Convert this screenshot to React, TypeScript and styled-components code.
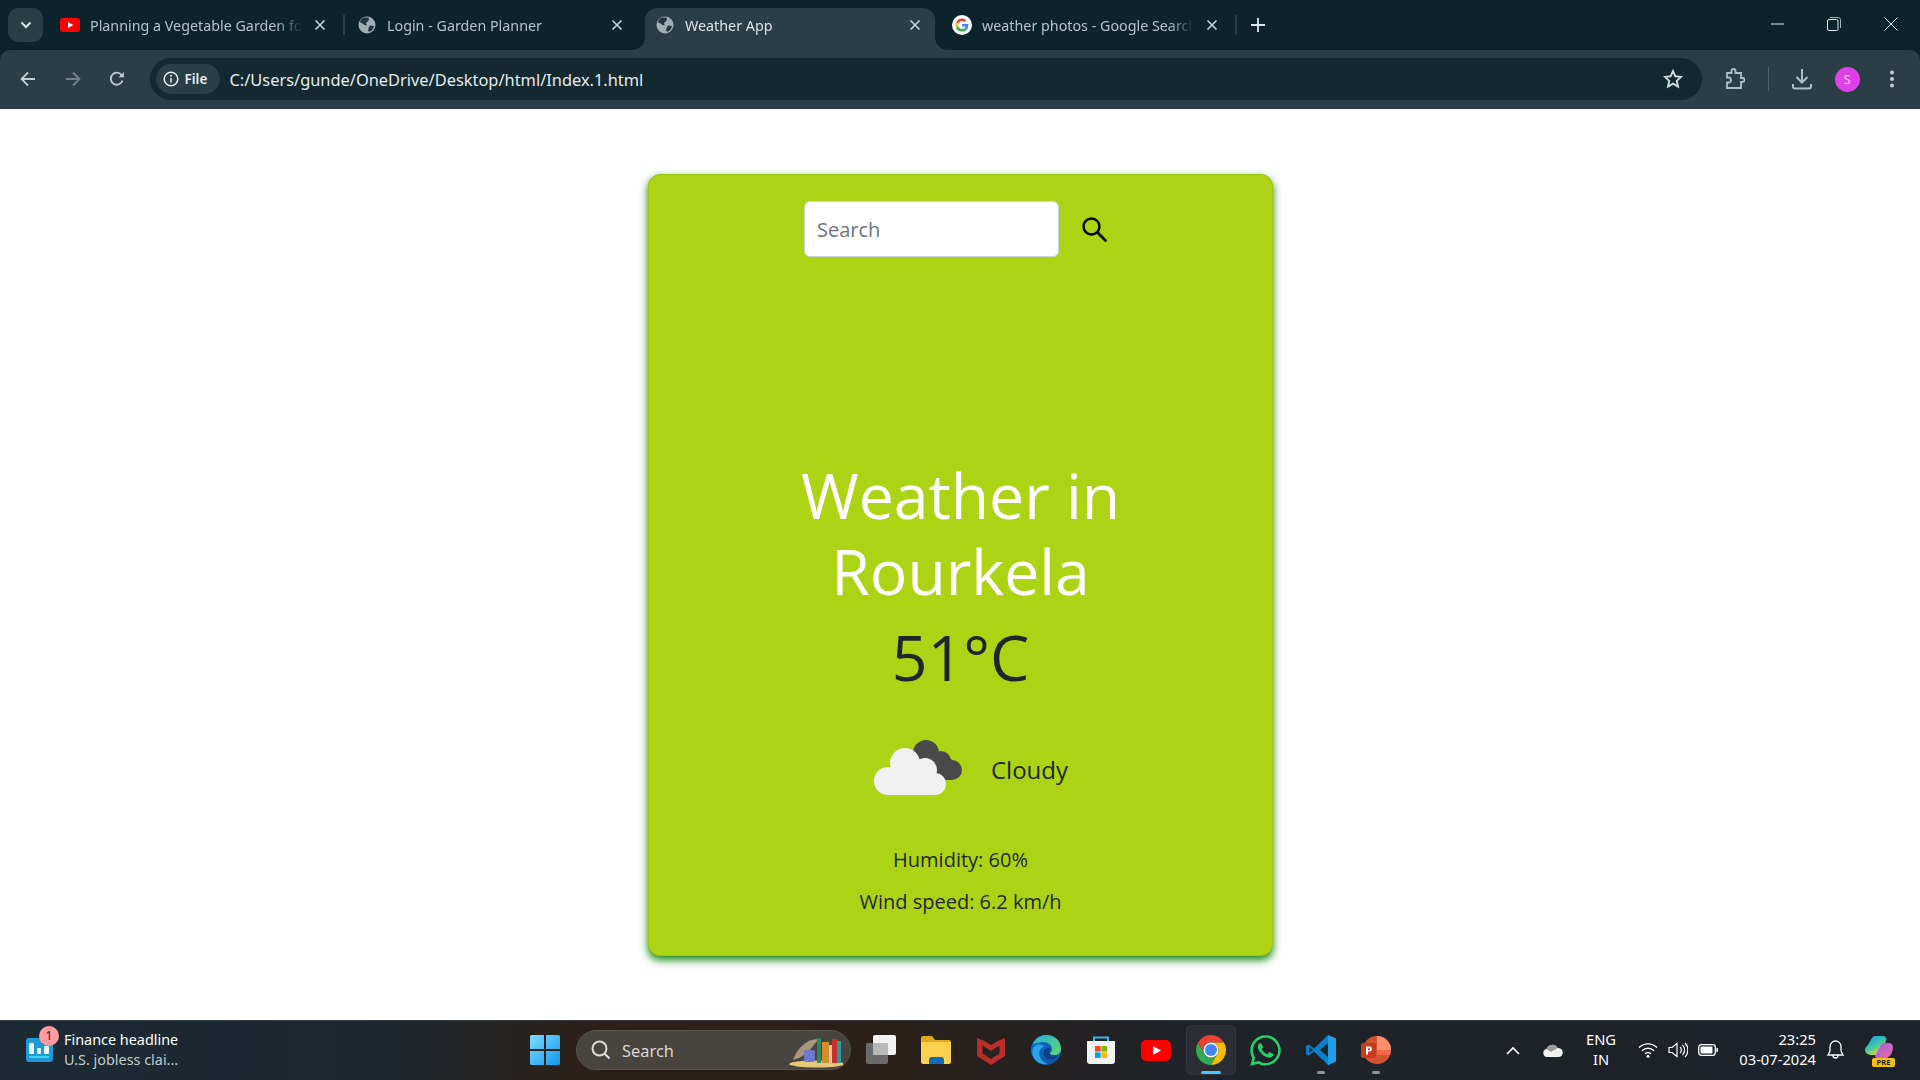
import * as React from 'react';
import styled, { createGlobalStyle } from 'styled-components';
import { FaWhatsapp } from 'react-icons/fa';

const GlobalStyle = createGlobalStyle`
    html, body {
        margin: 0;
        padding: 0;
        height: 100%;
        background: #fff;
        overflow: hidden;
    }
    #root {
        height: 100%;
    }
    * {
        box-sizing: border-box;
    }
`;

const UI_FONT = `"Noto Sans", "Open Sans", sans-serif`;
const PAGE_FONT = `"Open Sans", "Noto Sans", sans-serif`;

const Screen = styled.div`
    display: flex;
    flex-direction: column;
    width: 1920px;
    height: 1080px;
    background: #0c232b;
    font-family: ${UI_FONT};
`;

/* ---------- tab strip ---------- */

const TabStrip = styled.div`
    display: flex;
    align-items: flex-start;
    height: 50px;
    background: #0c232b;
    padding-left: 8px;
    flex: none;
`;

const TabSearchButton = styled.div`
    display: flex;
    align-items: center;
    justify-content: center;
    width: 35px;
    height: 34px;
    margin-top: 8px;
    margin-right: 5px;
    border-radius: 10px;
    background: #2a3e46;
`;

const Tab = styled.div<{ $active?: boolean; $divider?: boolean }>`
    position: relative;
    display: flex;
    align-items: center;
    width: 297px;
    height: 42px;
    margin-top: 8px;
    padding: 0 15px 8px 12px;
    color: ${({ $active }) => ($active ? '#d8e2e6' : '#b4c2c8')};
    font-size: 14.3px;
    background: ${({ $active }) => ($active ? '#2a3e46' : 'transparent')};
    border-radius: 12px 12px 0 0;

    &::after {
        content: '';
        display: ${({ $divider }) => ($divider ? 'block' : 'none')};
        position: absolute;
        right: 0;
        top: 7px;
        width: 2px;
        height: 20px;
        background: #2a3e46;
    }
`;

const ActiveTab = styled(Tab)`
    width: 290px;
    margin-left: 3px;
    margin-right: 5px;
    padding-left: 10px;
    padding-right: 10px;

    &::before,
    &::after {
        content: '';
        display: block;
        position: absolute;
        bottom: 0;
        top: auto;
        width: 12px;
        height: 12px;
        background: radial-gradient(circle at 0 0, #0c232b 11.5px, #2a3e46 12px);
    }
    &::before {
        left: -12px;
        right: auto;
    }
    &::after {
        left: auto;
        right: -12px;
        background: radial-gradient(circle at 100% 0, #0c232b 11.5px, #2a3e46 12px);
    }
`;

const Favicon = styled.span`
    display: flex;
    flex: none;
    width: 20px;
    height: 20px;
    margin-right: 10px;
    align-items: center;
    justify-content: center;
`;

const TabTitle = styled.span`
    flex: 1;
    overflow: hidden;
    white-space: nowrap;
    -webkit-mask-image: linear-gradient(to right, #000 88%, transparent 100%);
    mask-image: linear-gradient(to right, #000 88%, transparent 100%);
`;

const TabClose = styled.span`
    display: flex;
    flex: none;
    margin-left: 12px;
    margin-right: 4px;
`;

const NewTab = styled.div`
    display: flex;
    align-items: center;
    justify-content: center;
    width: 24px;
    height: 34px;
    margin-top: 8px;
    margin-left: 9px;
`;

const WindowControls = styled.div`
    display: flex;
    margin-left: auto;
    height: 48px;
    align-items: center;
    padding-right: 1px;
`;

const WindowButton = styled.div`
    display: flex;
    align-items: center;
    justify-content: center;
    width: 56.5px;
`;

/* ---------- toolbar ---------- */

const Toolbar = styled.div`
    display: flex;
    align-items: center;
    height: 59px;
    flex: none;
    padding: 0 5px 1px 5px;
    background: #2a3e46;
    border-radius: 10px 10px 0 0;
`;

const NavButton = styled.div`
    display: flex;
    align-items: center;
    justify-content: center;
    width: 45.5px;
    height: 40px;
`;

const ReloadButton = styled(NavButton)`
    padding-right: 3px;
`;

const Omnibox = styled.div`
    display: flex;
    align-items: center;
    width: 1552px;
    height: 42px;
    margin-left: 8px;
    padding: 0 19px 0 6px;
    border-radius: 21px;
    background: #14282f;
`;

const SiteChip = styled.div`
    display: flex;
    align-items: center;
    gap: 6px;
    height: 30px;
    width: 64px;
    padding-left: 7px;
    border-radius: 15px;
    background: #2a3e46;
    color: #e4ecef;
    font-size: 13.5px;
    font-weight: 600;
`;

const UrlText = styled.span`
    margin-left: 10px;
    color: #e4ecef;
    font-size: 16.4px;
    white-space: nowrap;
`;

const StarSlot = styled.span`
    display: flex;
    margin-left: auto;
`;

const ToolbarActions = styled.div`
    display: flex;
    align-items: center;
    flex: 1;
    padding-left: 23px;
`;

const ToolDivider = styled.span`
    width: 1px;
    height: 24px;
    margin: 0 23px 0 23px;
    background: #4b5f66;
`;

const Avatar = styled.span`
    display: flex;
    align-items: center;
    justify-content: center;
    width: 25px;
    height: 25px;
    margin-left: 23px;
    margin-right: 30px;
    border-radius: 50%;
    background: #e040e8;
    color: #ffd9fb;
    font-size: 12px;
`;

/* ---------- page ---------- */

const Page = styled.main`
    flex: 1;
    display: flex;
    justify-content: center;
    align-items: flex-start;
    padding-top: 65px;
    padding-left: 1px;
    background: #fff;
    font-family: ${PAGE_FONT};
`;

const WeatherCard = styled.section`
    display: flex;
    flex-direction: column;
    align-items: center;
    width: 625px;
    height: 782px;
    padding-top: 26px;
    background: #acd414;
    border: 1px solid #9fc412;
    border-radius: 12px;
    box-shadow: 0 4px 8px rgba(0, 128, 0, 0.95);
    color: #212529;
`;

const SearchRow = styled.form`
    display: flex;
    align-items: center;
    margin: 0;
`;

const SearchInput = styled.input`
    width: 255px;
    height: 56px;
    padding: 0 12px;
    border: 1px solid #ced4da;
    border-radius: 6px;
    background: #fff;
    font-family: ${PAGE_FONT};
    font-size: 20px;
    outline: none;

    &::placeholder {
        color: #6c757d;
        opacity: 1;
    }
`;

const SearchButton = styled.button`
    display: flex;
    align-items: center;
    width: 58px;
    height: 56px;
    padding: 0 0 0 22px;
    border: 0;
    background: transparent;
`;

const Title = styled.h1`
    width: 400px;
    margin: 200px 0 0;
    color: #fff;
    font-size: 62.5px;
    font-weight: 400;
    line-height: 75.5px;
    text-align: center;
`;

const Temperature = styled.h2`
    margin: 13px 0 0;
    font-size: 62.5px;
    font-weight: 400;
    line-height: 72px;
`;

const ConditionRow = styled.div`
    display: flex;
    align-items: center;
    margin-top: 43px;
    margin-left: 20px;
    height: 66px;
`;

const ConditionIcon = styled.svg`
    width: 90px;
    height: 60px;
    margin-right: 28px;
`;

const ConditionText = styled.span`
    font-size: 24px;
    margin-right: 0;
`;

const Stat = styled.p<{ $first?: boolean }>`
    margin: ${({ $first }) => ($first ? '43px' : '12px')} 0 0;
    font-size: 20px;
    line-height: 30px;
`;

/* ---------- taskbar ---------- */

const Taskbar = styled.footer`
    display: flex;
    align-items: center;
    height: 60px;
    flex: none;
    padding-bottom: 1px;
    border-top: 1px solid #343c42;
    background: linear-gradient(
        90deg,
        #1b2a33 0%,
        #1e2830 20%,
        #2c211a 30%,
        #2a2019 46%,
        #1f2329 62%,
        #1c2229 100%
    );
    color: #fff;
`;

const Widget = styled.div`
    display: flex;
    align-items: center;
    width: 517px;
    padding-left: 26px;
`;

const WidgetIcon = styled.span`
    position: relative;
    display: flex;
    width: 28px;
    height: 30px;
    margin-right: 10px;
`;

const WidgetBadge = styled.span`
    position: absolute;
    left: 13px;
    top: -9px;
    width: 20px;
    height: 20px;
    border-radius: 50%;
    background: #ff99a4;
    color: #2a1a1c;
    font-size: 12px;
    line-height: 20px;
    text-align: center;
`;

const WidgetText = styled.div`
    display: flex;
    flex-direction: column;
    font-size: 14.4px;
    line-height: 20px;
`;

const WidgetSub = styled.span`
    color: #c4c9cc;
`;

const TaskCell = styled.div<{ $active?: boolean }>`
    position: relative;
    display: flex;
    align-items: center;
    justify-content: center;
    width: ${({ $active }) => ($active ? '50px' : '55px')};
    height: 50px;
    margin: 0 ${({ $active }) => ($active ? '2.5px' : '0')};
    border-radius: 6px;
    background: ${({ $active }) => ($active ? '#2a2e34' : 'transparent')};
    box-shadow: ${({ $active }) => ($active ? 'inset 0 0 0 1px #33373d' : 'none')};
`;

const RunDot = styled.span<{ $active?: boolean }>`
    position: absolute;
    bottom: 1px;
    left: 50%;
    width: ${({ $active }) => ($active ? '20px' : '8px')};
    height: 3px;
    margin-left: ${({ $active }) => ($active ? '-10px' : '-4px')};
    border-radius: 2px;
    background: ${({ $active }) => ($active ? '#4cc2ff' : '#8f9396')};
`;

const SearchPill = styled.div`
    display: flex;
    align-items: center;
    width: 275px;
    height: 40px;
    margin: 0 2px 0 4px;
    padding-left: 14px;
    border-radius: 20px;
    border: 1px solid #57534d;
    background: #48443e;
    color: #d6d4d0;
    font-size: 16.4px;
`;

const PillLabel = styled.span`
    margin-left: 11px;
`;

const PillArt = styled.svg`
    margin-left: auto;
    margin-right: 7px;
`;

const Tray = styled.div`
    display: flex;
    align-items: center;
    margin-left: auto;
    padding-right: 14px;
`;

const TrayCell = styled.div<{ $width: number }>`
    display: flex;
    align-items: center;
    justify-content: center;
    width: ${({ $width }) => $width}px;
`;

const TrayLabel = styled.div<{ $align?: string }>`
    display: flex;
    flex-direction: column;
    align-items: ${({ $align }) => $align || 'center'};
    margin-bottom: 2px;
    font-size: 14.7px;
    line-height: 20px;
    white-space: nowrap;
`;

const ClockCell = styled(TrayCell)`
    justify-content: flex-end;
`;

const CopilotWrap = styled.div`
    position: relative;
    display: flex;
    width: 30px;
    height: 30px;
`;

const PreTag = styled.span`
    position: absolute;
    left: 7px;
    bottom: -2px;
    width: 23px;
    height: 9px;
    border-radius: 2px;
    background: #f5c211;
    color: #1c1c1c;
    font-size: 7.5px;
    font-weight: 700;
    line-height: 9px;
    text-align: center;
`;

/* ---------- icons ---------- */

const CloseIcon = ({ color = '#c8d4d9' }: { color?: string }) => (
    <svg width="12" height="12" viewBox="0 0 12 12">
        <path d="M1.5 1.5l9 9M10.5 1.5l-9 9" stroke={color} strokeWidth="1.6" fill="none" />
    </svg>
);

const GlobeIcon = () => (
    <svg width="18" height="18" viewBox="0 0 18 18">
        <circle cx="9" cy="9" r="8.5" fill="#a0adb3" />
        <path d="M6 1.5l5 .3-.5 3-2.5 2.2.8 2.5-2.3-.4L3.5 6.8 1.8 6.4C2.6 4 4 2.4 6 1.5z" fill="#20363e" />
        <path d="M12 9.5l4 .5c-.4 2.6-2 4.8-4.4 5.8L10 15l.5-3z" fill="#20363e" />
    </svg>
);

const YoutubeIcon = ({ size = 20 }: { size?: number }) => (
    <svg width={size} height={size * 0.7} viewBox="0 0 30 21">
        <rect width="30" height="21" rx="5" fill="#f00" />
        <path d="M12 6l8 4.5-8 4.5z" fill="#fff" />
    </svg>
);

const GoogleIcon = () => (
    <svg width="20" height="20" viewBox="0 0 20 20">
        <circle cx="10" cy="10" r="10" fill="#fff" />
        <g transform="translate(3.4 3.4) scale(0.275)">
            <path fill="#EA4335" d="M24 9.5c3.54 0 6.71 1.22 9.21 3.6l6.85-6.85C35.9 2.38 30.47 0 24 0 14.62 0 6.51 5.38 2.56 13.22l7.98 6.19C12.43 13.72 17.74 9.5 24 9.5z" />
            <path fill="#4285F4" d="M46.98 24.55c0-1.57-.15-3.09-.38-4.55H24v9.02h12.94c-.58 2.96-2.26 5.48-4.78 7.18l7.73 6c4.51-4.18 7.09-10.36 7.09-17.65z" />
            <path fill="#FBBC05" d="M10.53 28.59c-.48-1.45-.76-2.99-.76-4.59s.27-3.14.76-4.59l-7.98-6.19C.92 16.46 0 20.12 0 24c0 3.88.92 7.54 2.56 10.78l7.97-6.19z" />
            <path fill="#34A853" d="M24 48c6.48 0 11.93-2.13 15.89-5.81l-7.73-6c-2.15 1.45-4.92 2.3-8.16 2.3-6.26 0-11.57-4.22-13.47-9.91l-7.98 6.19C6.51 42.62 14.62 48 24 48z" />
        </g>
    </svg>
);

const ChromeIcon = () => (
    <svg width="30" height="30" viewBox="2 2 44 44">
        <path fill="#ea4335" d="M43.05 13A22 22 0 0 0 4.95 13L14.47 29.5A11 11 0 0 1 24 13z" />
        <path fill="#34a853" d="M4.95 13A22 22 0 0 0 24 46L33.53 29.5A11 11 0 0 1 14.47 29.5z" />
        <path fill="#fbbc04" d="M24 46A22 22 0 0 0 43.05 13H24A11 11 0 0 1 33.53 29.5z" />
        <circle cx="24" cy="24" r="11" fill="#fff" />
        <circle cx="24" cy="24" r="8.8" fill="#4285f4" />
    </svg>
);

const CloudIcon = () => (
    <ConditionIcon viewBox="0 0 90 60">
        <g fill="#4a4a4a">
            <circle cx="53" cy="14" r="13" />
            <circle cx="68" cy="22" r="10" />
            <circle cx="79" cy="31" r="10" />
            <path d="M45 6L70 14 86 26 78 41H60z" />
        </g>
        <g fill="#f1f1f1">
            <circle cx="32" cy="24" r="15" />
            <circle cx="52" cy="31" r="12" />
            <circle cx="15" cy="42" r="14" />
            <circle cx="62" cy="45" r="11" />
            <rect x="15" y="36" width="47" height="20" />
        </g>
    </ConditionIcon>
);

const EdgeIcon = () => (
    <svg width="30" height="30" viewBox="0 0 30 30">
        <defs>
            <linearGradient id="edgeTop" x1="0" y1="0" x2="1" y2="1">
                <stop offset="0" stopColor="#1fb5d8" />
                <stop offset="1" stopColor="#62d66d" />
            </linearGradient>
            <linearGradient id="edgeLow" x1="0" y1="0" x2="1" y2="1">
                <stop offset="0" stopColor="#0f74c7" />
                <stop offset="1" stopColor="#0c4f9d" />
            </linearGradient>
        </defs>
        <circle cx="15" cy="15" r="15" fill="url(#edgeLow)" />
        <path d="M2 8C5 3 10 0 15 0c9 0 15 6 15 14 0 4-3 6-7 6-3 0-4-1-4-2 1-1 2-2 2-4 0-4-4-7-9-7-4 0-8 2-10 1z" fill="url(#edgeTop)" />
        <path d="M13 12c-4 1-6 5-4 10 1 3 4 6 8 7-5 1-11-1-14-6C0 18 1 12 6 10c3-1 6 0 7 2z" fill="#2aa4e8" />
        <path d="M17 13c-3 0-5 3-4 7 1 3 5 5 9 4 3-1 5-3 6-5-2 2-5 3-7 2-3-1-3-4-2-6 1-1 0-2-2-2z" fill="#0b3f86" />
    </svg>
);

const StoreIcon = () => (
    <svg width="30" height="30" viewBox="0 0 30 30">
        <path d="M8 7V2.5h14V7" stroke="#35b8f0" strokeWidth="2" fill="none" />
        <path d="M1 6h28v20a3 3 0 0 1-3 3H4a3 3 0 0 1-3-3z" fill="#f2f2f2" />
        <rect x="9" y="11" width="5.6" height="5.6" fill="#f25022" />
        <rect x="15.4" y="11" width="5.6" height="5.6" fill="#7fba00" />
        <rect x="9" y="17.4" width="5.6" height="5.6" fill="#00a4ef" />
        <rect x="15.4" y="17.4" width="5.6" height="5.6" fill="#ffb900" />
    </svg>
);

const VsCodeIcon = () => (
    <svg width="30" height="30" viewBox="0 0 30 30">
        <path d="M22 0l8 3.5v23L22 30 8 16.5 3 20.5 0 19V11l3-1.500 5 4z" fill="#0a7fcc" />
        <path d="M22 0l8 3.5v23L22 30z" fill="#1e9ee8" />
        <path d="M22 8l-8 7 8 7z" fill="#20262c" />
        <path d="M3 12l4 3-4 3z" fill="#20262c" />
    </svg>
);

const PowerPointIcon = () => (
    <svg width="30" height="30" viewBox="0 0 30 30">
        <circle cx="16" cy="15" r="14" fill="#d35230" />
        <path d="M16 1a14 14 0 0 1 14 14H16z" fill="#ff8f6b" />
        <path d="M16 15h14a14 14 0 0 1-1 5H16z" fill="#ed6c47" />
        <rect x="0" y="8" width="15" height="15" rx="2" fill="#c43e1c" />
        <path d="M5 11.500h3.400a2.500 2.500 0 0 1 0 5H7v3H5zM7 13.200v1.800h1.200a.9.9 0 0 0 0-1.800z" fill="#fff" />
    </svg>
);

const McAfeeIcon = () => (
    <svg width="28" height="30" viewBox="0 0 28 30">
        <path d="M0 3l7.500 3L14 10l6.500-4L28 3v18l-14 9-14-9z" fill="#b92d2b" />
        <path d="M5.500 10.500L14 16l8.500-5.500v8L14 24l-8.500-5.500z" fill="#2a221e" />
    </svg>
);

const BookShelf = () => (
    <PillArt width="56" height="40" viewBox="0 0 56 40">
        <ellipse cx="30" cy="34" rx="28" ry="3.500" fill="#e8c77a" />
        <path d="M6 30C10 18 20 9 31 9 27 16 20 24 12 28z" fill="#a8957e" />
        <rect x="17" y="20" width="11" height="12" rx="2" fill="#6d78d0" />
        <rect x="30" y="8" width="4" height="25" fill="#2f8a5b" />
        <rect x="35" y="12" width="7" height="21" fill="#d98a2f" />
        <rect x="42" y="15" width="3" height="18" fill="#dcc9a0" />
        <rect x="45" y="9" width="5" height="24" fill="#c7312c" />
        <rect x="50" y="11" width="4" height="22" fill="#2a9d9d" />
    </PillArt>
);

export default function App() {
    return (
        <Screen>
            <GlobalStyle />
            <TabStrip>
                <TabSearchButton>
                    <svg width="12" height="8" viewBox="0 0 12 8">
                        <path d="M1.500 1.500L6 6l4.500-4.500" stroke="#dfe7ea" strokeWidth="2" fill="none" />
                    </svg>
                </TabSearchButton>
                <Tab $divider>
                    <Favicon>
                        <YoutubeIcon />
                    </Favicon>
                    <TabTitle>Planning a Vegetable Garden for Beginners</TabTitle>
                    <TabClose>
                        <CloseIcon />
                    </TabClose>
                </Tab>
                <Tab>
                    <Favicon>
                        <GlobeIcon />
                    </Favicon>
                    <TabTitle>Login - Garden Planner</TabTitle>
                    <TabClose>
                        <CloseIcon />
                    </TabClose>
                </Tab>
                <ActiveTab $active>
                    <Favicon>
                        <GlobeIcon />
                    </Favicon>
                    <TabTitle>Weather App</TabTitle>
                    <TabClose>
                        <CloseIcon />
                    </TabClose>
                </ActiveTab>
                <Tab $divider>
                    <Favicon>
                        <GoogleIcon />
                    </Favicon>
                    <TabTitle>weather photos - Google Search</TabTitle>
                    <TabClose>
                        <CloseIcon />
                    </TabClose>
                </Tab>
                <NewTab>
                    <svg width="14" height="14" viewBox="0 0 14 14">
                        <path d="M7 0v14M0 7h14" stroke="#dfe7ea" strokeWidth="1.800" />
                    </svg>
                </NewTab>
                <WindowControls>
                    <WindowButton>
                        <svg width="14" height="2" viewBox="0 0 14 2">
                            <path d="M0 1h13" stroke="#e8eef0" strokeWidth="1" />
                        </svg>
                    </WindowButton>
                    <WindowButton>
                        <svg width="14" height="14" viewBox="0 0 14 14">
                            <rect x="0.500" y="2.500" width="10.500" height="11" rx="1.500" stroke="#e8eef0" fill="none" />
                            <path d="M3 .5h8.500a2 2 0 0 1 2 2V11" stroke="#a5b2b7" fill="none" />
                        </svg>
                    </WindowButton>
                    <WindowButton>
                        <svg width="14" height="14" viewBox="0 0 14 14">
                            <path d="M.5.5l13 13M13.500.5l-13 13" stroke="#e8eef0" strokeWidth="1" />
                        </svg>
                    </WindowButton>
                </WindowControls>
            </TabStrip>

            <Toolbar>
                <NavButton>
                    <svg width="16" height="16" viewBox="0 0 16 16">
                        <path d="M15 8H2M8 1.500L1.500 8 8 14.500" stroke="#bfcdd2" strokeWidth="1.800" fill="none" />
                    </svg>
                </NavButton>
                <NavButton>
                    <svg width="16" height="16" viewBox="0 0 16 16">
                        <path d="M1 8h13M8 1.500L14.500 8 8 14.500" stroke="#6f8087" strokeWidth="1.800" fill="none" />
                    </svg>
                </NavButton>
                <ReloadButton>
                    <svg width="16" height="16" viewBox="0 0 16 16">
                        <path d="M13.500 9.500A6 6 0 1 1 12.500 4L14 5.500" stroke="#bfcdd2" strokeWidth="1.800" fill="none" />
                        <path d="M14.800 1v5.300H9.500z" fill="#bfcdd2" />
                    </svg>
                </ReloadButton>
                <Omnibox>
                    <SiteChip>
                        <svg width="16" height="16" viewBox="0 0 16 16">
                            <circle cx="8" cy="8" r="6.800" stroke="#e4ecef" strokeWidth="1.500" fill="none" />
                            <path d="M8 7v4.500" stroke="#e4ecef" strokeWidth="1.600" />
                            <circle cx="8" cy="4.800" r="1" fill="#e4ecef" />
                        </svg>
                        File
                    </SiteChip>
                    <UrlText>C:/Users/gunde/OneDrive/Desktop/html/Index.1.html</UrlText>
                    <StarSlot>
                        <svg width="20" height="20" viewBox="0 0 20 20">
                            <path d="M10 2l2.400 5.300 5.600.6-4.200 3.900 1.200 5.700L10 14.600l-5 2.900 1.200-5.700L2 7.900l5.600-.6z" stroke="#d0dade" strokeWidth="1.900" fill="none" />
                        </svg>
                    </StarSlot>
                </Omnibox>
                <ToolbarActions>
                    <svg width="20" height="22" viewBox="0 0 20 22">
                        <path d="M2 5h4.500V3a2 2 0 0 1 4 0v2H16v5h1.500a2 2 0 0 1 0 4H16v6H2v-5.500h1.500a2.500 2.500 0 0 0 0-5H2z" stroke="#a9c0c7" strokeWidth="1.800" fill="none" />
                    </svg>
                    <ToolDivider />
                    <svg width="20" height="22" viewBox="0 0 20 22">
                        <path d="M10 1v13M4.500 9l5.500 5.500L15.500 9" stroke="#a9c0c7" strokeWidth="2" fill="none" />
                        <path d="M1 16v2.500a2 2 0 0 0 2 2h14a2 2 0 0 0 2-2V16" stroke="#a9c0c7" strokeWidth="2" fill="none" />
                    </svg>
                    <Avatar>S</Avatar>
                    <svg width="4" height="18" viewBox="0 0 4 18">
                        <circle cx="2" cy="2.500" r="2" fill="#bfcdd2" />
                        <circle cx="2" cy="9" r="2" fill="#bfcdd2" />
                        <circle cx="2" cy="15.500" r="2" fill="#bfcdd2" />
                    </svg>
                </ToolbarActions>
            </Toolbar>

            <Page>
                <WeatherCard>
                    <SearchRow>
                        <SearchInput placeholder="Search" readOnly />
                        <SearchButton type="button" aria-label="Search">
                            <svg width="26" height="26" viewBox="0 0 26 26">
                                <circle cx="10.500" cy="10.500" r="8" stroke="#000" strokeWidth="2.400" fill="none" />
                                <path d="M16.500 16.500l8 8" stroke="#000" strokeWidth="2.600" strokeLinecap="round" />
                            </svg>
                        </SearchButton>
                    </SearchRow>
                    <Title>Weather in Rourkela</Title>
                    <Temperature>51°C</Temperature>
                    <ConditionRow>
                        <CloudIcon />
                        <ConditionText>Cloudy</ConditionText>
                    </ConditionRow>
                    <Stat $first>Humidity: 60%</Stat>
                    <Stat>Wind speed: 6.2 km/h</Stat>
                </WeatherCard>
            </Page>

            <Taskbar>
                <Widget>
                    <WidgetIcon>
                        <svg width="28" height="30" viewBox="0 0 28 30">
                            <rect y="3" width="27" height="24" rx="3" fill="#1f9ad6" />
                            <rect x="3" y="8" width="5" height="11" rx="1" fill="#e8f6fd" />
                            <rect x="11" y="13" width="4" height="6" rx="1" fill="#e8f6fd" />
                            <rect x="18" y="11" width="5" height="8" rx="1" fill="#e8f6fd" />
                            <rect x="3" y="21" width="20" height="2" fill="#3fd0ef" />
                        </svg>
                        <WidgetBadge>1</WidgetBadge>
                    </WidgetIcon>
                    <WidgetText>
                        <span>Finance headline</span>
                        <WidgetSub>U.S. jobless clai...</WidgetSub>
                    </WidgetText>
                </Widget>
                <TaskCell>
                    <svg width="30" height="30" viewBox="0 0 30 30">
                        <defs>
                            <linearGradient id="winLogo" x1="0" y1="0" x2="1" y2="1">
                                <stop offset="0" stopColor="#7fdcff" />
                                <stop offset="1" stopColor="#0f98ee" />
                            </linearGradient>
                        </defs>
                        <path d="M0 1.500A1.500 1.500 0 0 1 1.500 0H14v14H0zM16 0h12.500A1.500 1.500 0 0 1 30 1.500V14H16zM0 16h14v14H1.500A1.500 1.500 0 0 1 0 28.500zM16 16h14v12.500a1.500 1.500 0 0 1-1.500 1.500H16z" fill="url(#winLogo)" />
                    </svg>
                </TaskCell>
                <SearchPill>
                    <svg width="20" height="20" viewBox="0 0 20 20">
                        <circle cx="8.500" cy="8.500" r="7" stroke="#dcdad6" strokeWidth="2" fill="none" />
                        <path d="M13.500 13.500l5 5" stroke="#dcdad6" strokeWidth="2.200" />
                    </svg>
                    <PillLabel>Search</PillLabel>
                    <BookShelf />
                </SearchPill>
                <TaskCell>
                    <svg width="30" height="30" viewBox="0 0 30 30">
                        <rect y="8" width="22" height="21" rx="2" fill="#6a6a6a" />
                        <rect x="7" y="0" width="23" height="20" rx="2" fill="#f1f1f1" />
                        <rect x="7" y="8" width="15" height="12" fill="#b9b9b9" />
                    </svg>
                </TaskCell>
                <TaskCell>
                    <svg width="30" height="28" viewBox="0 0 30 28">
                        <path d="M0 2a2 2 0 0 1 2-2h9l3 4h14a2 2 0 0 1 2 2v4H0z" fill="#e0a818" />
                        <path d="M0 6h30v20a2 2 0 0 1-2 2H2a2 2 0 0 1-2-2z" fill="#fcd14d" />
                        <path d="M8 28v-4a3 3 0 0 1 3-3h9a3 3 0 0 1 3 3v4z" fill="#0f6cbd" />
                    </svg>
                </TaskCell>
                <TaskCell>
                    <McAfeeIcon />
                </TaskCell>
                <TaskCell>
                    <EdgeIcon />
                </TaskCell>
                <TaskCell>
                    <StoreIcon />
                </TaskCell>
                <TaskCell>
                    <YoutubeIcon size={30} />
                </TaskCell>
                <TaskCell $active>
                    <ChromeIcon />
                    <RunDot $active />
                </TaskCell>
                <TaskCell>
                    <FaWhatsapp size={35} color="#25d366" />
                </TaskCell>
                <TaskCell>
                    <VsCodeIcon />
                    <RunDot />
                </TaskCell>
                <TaskCell>
                    <PowerPointIcon />
                    <RunDot />
                </TaskCell>
                <Tray>
                    <TrayCell $width={40}>
                        <svg width="14" height="9" viewBox="0 0 14 9">
                            <path d="M1 8l6-6 6 6" stroke="#fff" strokeWidth="1.600" fill="none" />
                        </svg>
                    </TrayCell>
                    <TrayCell $width={40}>
                        <svg width="20" height="13" viewBox="0 0 20 13">
                            <path d="M4 13a4 4 0 0 1-.5-7.900A6 6 0 0 1 14.500 4 4.500 4.500 0 0 1 16 13z" fill="#f0f0f0" />
                            <path d="M3.500 5.100A6 6 0 0 1 14.500 4L8 8z" fill="#9a9a9a" />
                        </svg>
                    </TrayCell>
                    <TrayCell $width={56}>
                        <TrayLabel>
                            <span>ENG</span>
                            <span>IN</span>
                        </TrayLabel>
                    </TrayCell>
                    <TrayCell $width={38}>
                        <svg width="20" height="16" viewBox="0 0 20 16">
                            <path d="M1 5.500a13 13 0 0 1 18 0M4 8.700a8.500 8.500 0 0 1 12 0M7 11.800a4 4 0 0 1 6 0" stroke="#fff" strokeWidth="1.400" fill="none" />
                            <circle cx="10" cy="14.300" r="1.500" fill="#fff" />
                        </svg>
                    </TrayCell>
                    <TrayCell $width={22}>
                        <svg width="20" height="16" viewBox="0 0 20 16">
                            <path d="M1 5.500h3L9 1.500v13L4 10.500H1z" stroke="#fff" strokeWidth="1.200" fill="none" />
                            <path d="M12 5a4 4 0 0 1 0 6M14.500 3a7 7 0 0 1 0 10M17 1a10 10 0 0 1 0 14" stroke="#fff" strokeWidth="1.200" fill="none" />
                        </svg>
                    </TrayCell>
                    <TrayCell $width={38}>
                        <svg width="20" height="12" viewBox="0 0 20 12">
                            <rect x="0.700" y="0.700" width="16.600" height="10.600" rx="2.500" stroke="#fff" strokeWidth="1.300" fill="none" />
                            <rect x="2.500" y="2.500" width="12" height="7" rx="1" fill="#fff" />
                            <rect x="18.300" y="4" width="1.700" height="4" rx="0.800" fill="#fff" />
                        </svg>
                    </TrayCell>
                    <ClockCell $width={89}>
                        <TrayLabel $align="flex-end">
                            <span>23:25</span>
                            <span>03-07-2024</span>
                        </TrayLabel>
                    </ClockCell>
                    <TrayCell $width={38}>
                        <svg width="17" height="20" viewBox="0 0 17 20">
                            <path d="M8.500 1a5.500 5.500 0 0 1 5.500 5.500V11l2 4H1l2-4V6.500A5.500 5.500 0 0 1 8.500 1zM6 15.500a2.500 2.500 0 0 0 5 0" stroke="#fff" strokeWidth="1.300" fill="none" />
                        </svg>
                    </TrayCell>
                    <TrayCell $width={52}>
                        <CopilotWrap>
                            <svg width="28" height="26" viewBox="0 0 28 26">
                                <defs>
                                    <linearGradient id="copilotA" x1="0" y1="0" x2="0.600" y2="1">
                                        <stop offset="0" stopColor="#1f8fe0" />
                                        <stop offset="0.550" stopColor="#38c6a8" />
                                        <stop offset="1" stopColor="#e8d23a" />
                                    </linearGradient>
                                    <linearGradient id="copilotB" x1="0" y1="0" x2="1" y2="1">
                                        <stop offset="0" stopColor="#9a5be8" />
                                        <stop offset="1" stopColor="#ef6f9b" />
                                    </linearGradient>
                                </defs>
                                <path d="M9 1h9c2 0 3 1 3.500 3L16 20H7c-4 0-7-2-7-5 0-2 1-3 2-4C4 9 6 3 9 1z" fill="url(#copilotA)" />
                                <path d="M17 8h7c2 0 4 2 4 4 0 4-2 9-6 11H12c-1 0-2-1-2-2z" fill="url(#copilotB)" />
                            </svg>
                            <PreTag>PRE</PreTag>
                        </CopilotWrap>
                    </TrayCell>
                </Tray>
            </Taskbar>
        </Screen>
    );
}
